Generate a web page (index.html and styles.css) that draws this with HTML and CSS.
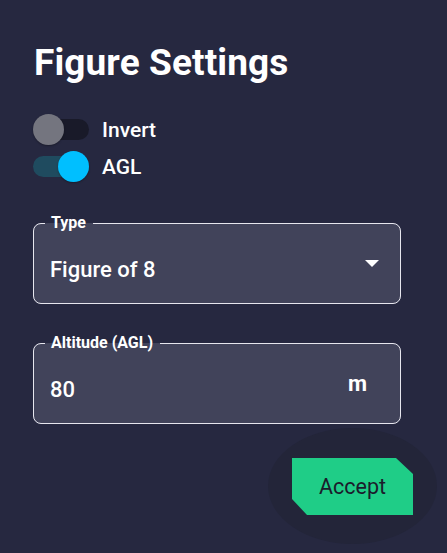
FILE: index.html
```html
<!DOCTYPE html>
<html>
<head>
<meta charset="utf-8">
<link rel="stylesheet" href="styles.css">
</head>
<body>
<div class="panel">
  <h1 class="title">Figure Settings</h1>
  <div class="toggles">
    <div class="toggle-row">
      <span class="switch off"><span class="track"></span><span class="thumb"></span></span>
      <span class="toggle-label">Invert</span>
    </div>
    <div class="toggle-row">
      <span class="switch on"><span class="track"></span><span class="thumb"></span></span>
      <span class="toggle-label">AGL</span>
    </div>
  </div>
  <fieldset class="field field-type">
    <legend class="legend">Type</legend>
    <div class="field-body">
      <span class="value">Figure of 8</span>
      <svg class="arrow" width="14" height="7" viewBox="0 0 14 7"><path d="M0 0 L14 0 L7 7 Z" fill="#ffffff"/></svg>
    </div>
  </fieldset>
  <fieldset class="field field-alt">
    <legend class="legend">Altitude (AGL)</legend>
    <div class="field-body">
      <span class="value">80</span>
      <span class="unit">m</span>
    </div>
  </fieldset>
  <div class="actions">
    <div class="btn-wrap">
      <span class="glow"></span>
      <button class="accept">Accept</button>
    </div>
  </div>
</div>
</body>
</html>
```
FILE: styles.css
```css
html, body {
  margin: 0;
  padding: 0;
}
body {
  background: #262840;
  width: 447px;
  height: 553px;
  overflow: hidden;
  font-family: Roboto, "Liberation Sans", sans-serif;
  color: #ffffff;
}
.panel {
  padding: 42px 46px 0 33px;
}
.title {
  margin: 0 0 0 1px;
  font-size: 37px;
  font-weight: 700;
  line-height: 42px;
  letter-spacing: 0.1px;
}
.toggles {
  margin-top: 27px;
  display: flex;
  flex-direction: column;
}
.toggle-row {
  height: 37px;
  display: flex;
  align-items: center;
}
.switch {
  position: relative;
  width: 56px;
  height: 31px;
  display: block;
  flex: none;
}
.track {
  position: absolute;
  left: 0;
  right: 0;
  top: 5px;
  height: 21px;
  border-radius: 11px;
}
.switch.off .track {
  background: #191a29;
}
.switch.on .track {
  background: #1f4b5f;
}
.thumb {
  position: absolute;
  top: 0;
  width: 31px;
  height: 31px;
  border-radius: 50%;
  box-shadow: 0 1px 2px rgba(0, 0, 0, 0.3);
}
.switch.off .thumb {
  left: 0;
  background: #74757f;
}
.switch.on .thumb {
  right: 0;
  background: #00bfff;
}
.toggle-label {
  margin-left: 13px;
  font-size: 21px;
  font-weight: 500;
  line-height: 26px;
}
.field {
  margin: 29px 0 0 0;
  padding: 0 16px;
  border: 1px solid #e6e6ee;
  border-radius: 8px;
  background: #41435a;
  min-width: 0;
}
.field-alt {
  margin-top: 30px;
}
.legend {
  margin-left: -5px;
  padding: 0 7px 0 6px;
  font-size: 16px;
  font-weight: 700;
  line-height: 18px;
}
.field-body {
  height: 71px;
  display: flex;
  align-items: flex-start;
  justify-content: space-between;
}
.value {
  margin-top: 25px;
  font-size: 22px;
  font-weight: 500;
  line-height: 26px;
}
.arrow {
  margin-top: 28px;
  margin-right: 5px;
  display: block;
}
.unit {
  margin-top: 19px;
  margin-right: 17px;
  font-size: 22px;
  font-weight: 700;
  line-height: 26px;
}
.actions {
  margin-top: 34px;
  margin-right: -12px;
  display: flex;
  justify-content: flex-end;
}
.btn-wrap {
  position: relative;
  width: 121px;
  height: 57px;
}
.glow {
  position: absolute;
  left: -24px;
  top: -30px;
  width: 169px;
  height: 116px;
  border-radius: 50%;
  background: #232539;
}
.accept {
  position: relative;
  display: block;
  width: 121px;
  height: 57px;
  margin: 0;
  padding: 0;
  border: none;
  background: #1fcd87;
  color: #1b1c2c;
  font-family: Roboto, "Liberation Sans", sans-serif;
  font-size: 21.5px;
  font-weight: 400;
  clip-path: polygon(0 0, calc(100% - 17px) 0, 100% 16px, 100% 100%, 15px 100%, 0 calc(100% - 16px));
}
```
